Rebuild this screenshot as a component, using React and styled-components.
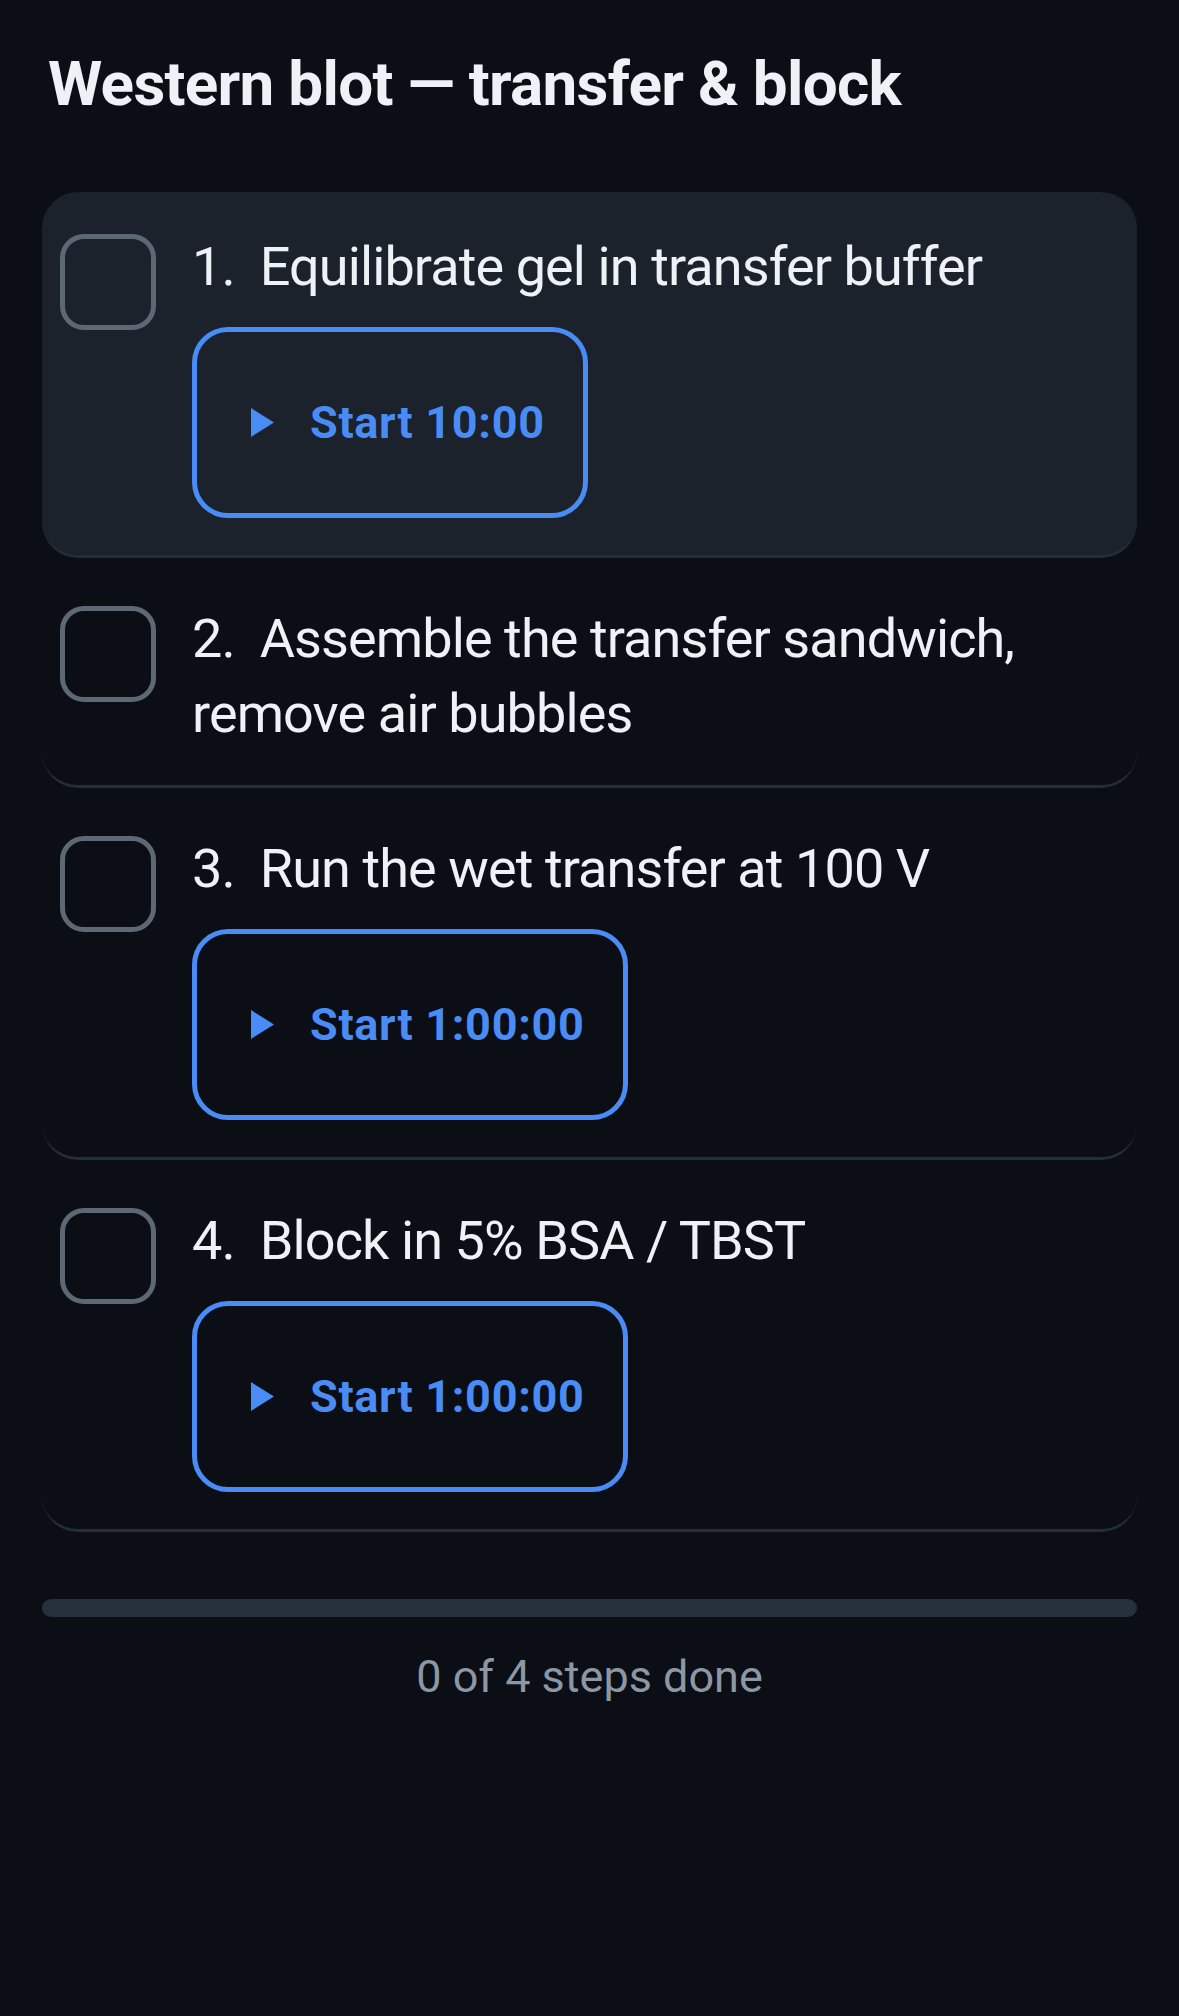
import * as React from 'react';
import styled, { createGlobalStyle } from 'styled-components';

const GlobalStyle = createGlobalStyle`
  html, body {
    margin: 0;
    padding: 0;
    background: #0b0e14;
  }

  body {
    font-family: Roboto, "Noto Sans", sans-serif;
    color: #eef1f5;
  }
`;

const Page = styled.main`
  display: flex;
  flex-direction: column;
  padding: 47px 42px 120px;
`;

const Title = styled.h1`
  margin: 0 0 71px;
  padding: 0 6px;
  font-size: 62px;
  line-height: 1.2;
  font-weight: 700;
  letter-spacing: -0.7px;
  color: #eef1f6;
`;

const StepList = styled.ol`
  display: flex;
  flex-direction: column;
  gap: 6px;
  margin: 0;
  padding: 0;
  list-style: none;
`;

const StepCard = styled.li`
  display: flex;
  align-items: flex-start;
  gap: 36px;
  padding: 42px 18px 34px;
  border-radius: 36px;
  border-bottom: 3px solid #252d37;
  background: ${props => (props.active ? '#1b222b' : 'transparent')};
`;

const Checkbox = styled.button`
  flex: none;
  width: 96px;
  height: 96px;
  padding: 0;
  border: 5px solid #5c6874;
  border-radius: 24px;
  background: ${props => (props.checked ? '#4a8cf5' : 'transparent')};
  cursor: pointer;
`;

const StepBody = styled.div`
  display: flex;
  flex-direction: column;
  align-items: flex-start;
  gap: 23px;
  min-width: 0;
  flex: 1;
`;

const StepText = styled.p`
  margin: -5px 0 0;
  font-size: 54px;
  line-height: 75px;
  letter-spacing: -0.9px;
  color: #eef1f5;
  text-decoration: ${props => (props.done ? 'line-through' : 'none')};
`;

const TimerButton = styled.button`
  display: flex;
  align-items: center;
  gap: 36px;
  height: 191px;
  margin-bottom: 3px;
  padding: 0 38px 0 54px;
  border: 5px solid #4a8cf5;
  border-radius: 36px;
  background: transparent;
  color: #4a8cf5;
  font-family: inherit;
  font-size: 45px;
  font-weight: 700;
  letter-spacing: 0.7px;
  cursor: pointer;
`;

const Progress = styled.div`
  height: 18px;
  margin-top: 67px;
  border-radius: 9px;
  background: #27313d;
  overflow: hidden;
`;

const ProgressFill = styled.div`
  height: 100%;
  background: #4a8cf5;
`;

const Summary = styled.p`
  margin: 26px 0 0;
  text-align: center;
  font-size: 45px;
  line-height: 1.5;
  color: #8b97a4;
`;

const PlayIcon = () => (
  <svg width="23" height="29" viewBox="0 0 23 29" aria-hidden="true">
    <path d="M0 0 L23 14.5 L0 29 Z" fill="currentColor" />
  </svg>
);

const steps = [
  { id: 1, text: 'Equilibrate gel in transfer buffer', timer: '10:00' },
  { id: 2, text: 'Assemble the transfer sandwich, remove air bubbles' },
  { id: 3, text: 'Run the wet transfer at 100 V', timer: '1:00:00' },
  { id: 4, text: 'Block in 5% BSA / TBST', timer: '1:00:00' }
];

export default function App() {
  const [done, setDone] = React.useState({});
  const doneCount = steps.filter(step => done[step.id]).length;
  const activeId = (steps.find(step => !done[step.id]) || {}).id;

  const toggle = id => setDone(prev => ({ ...prev, [id]: !prev[id] }));

  return (
    <Page>
      <GlobalStyle />
      <Title>Western blot — transfer &amp; block</Title>
      <StepList>
        {steps.map((step, i) => (
          <StepCard key={step.id} active={step.id === activeId}>
            <Checkbox
              checked={!!done[step.id]}
              aria-label={`Mark step ${i + 1} done`}
              onClick={() => toggle(step.id)}
            />
            <StepBody>
              <StepText done={!!done[step.id]}>
                {`${i + 1}.\u00a0\u00a0${step.text}`}
              </StepText>
              {step.timer && (
                <TimerButton>
                  <PlayIcon />
                  Start {step.timer}
                </TimerButton>
              )}
            </StepBody>
          </StepCard>
        ))}
      </StepList>
      <Progress>
        <ProgressFill style={{ width: `${(doneCount / steps.length) * 100}%` }} />
      </Progress>
      <Summary>
        {doneCount} of {steps.length} steps done
      </Summary>
    </Page>
  );
}
